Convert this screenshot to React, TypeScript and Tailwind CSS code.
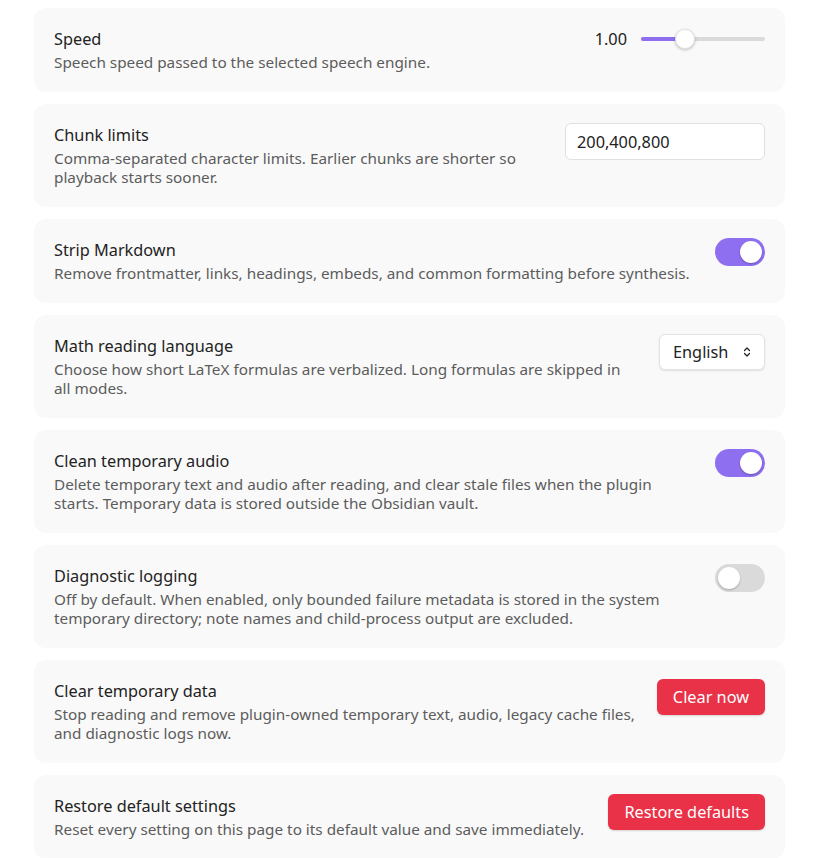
import type { ReactNode } from 'react';

interface SettingRowProps {
  name: string;
  desc: string;
  infoWidth: string;
  children: ReactNode;
}

function SettingRow({ name, desc, infoWidth, children }: SettingRowProps) {
  return (
    <div className="flex items-start justify-between rounded-xl bg-[#f9f9f9] px-5 pt-[19px] pb-5">
      <div className={`${infoWidth} min-w-0`}>
        <div className="text-[16.3px] leading-6 text-[#222222]">{name}</div>
        <div className="mt-[2px] text-[15.3px] leading-[19px] text-[#5c5c5c]">{desc}</div>
      </div>
      <div className="flex shrink-0 items-center justify-end">{children}</div>
    </div>
  );
}

function Toggle({ on }: { on: boolean }) {
  return (
    <div
      className={`flex h-[28px] w-[50px] items-center rounded-full px-[3px] ${
        on ? 'justify-end bg-[#8e6ff0]' : 'justify-start bg-[#dadada]'
      }`}
    >
      <div className="h-[22px] w-[22px] rounded-full bg-white shadow-[0_1px_2px_rgba(0,0,0,0.25)]" />
    </div>
  );
}

function DangerButton({ label }: { label: string }) {
  return (
    <button
      type="button"
      className="h-9 rounded-md bg-[#e93147] px-4 text-[16.3px] text-white shadow-[0_1px_2px_rgba(0,0,0,0.15)]"
    >
      {label}
    </button>
  );
}

export default function App() {
  return (
    <div className="min-h-[858px] bg-white font-['Noto_Sans','Open_Sans',sans-serif]">
      <div className="ml-[34px] flex w-[751px] flex-col gap-3 pt-2">
        <SettingRow name="Speed" desc="Speech speed passed to the selected speech engine." infoWidth="w-[500px]">
          <div className="flex h-6 items-center gap-[14px]">
            <span className="text-[16.3px] text-[#222222]">1.00</span>
            <div className="relative h-6 w-[124px]">
              <div className="absolute top-[10px] left-0 h-1 w-full rounded-full bg-[#dadada]" />
              <div className="absolute top-[10px] left-0 h-1 w-[44px] rounded-full bg-[#8e6ff0]" />
              <div className="absolute top-[2px] left-[34px] h-5 w-5 rounded-full border border-[#e4e4e4] bg-white shadow-[0_1px_3px_rgba(0,0,0,0.25)]" />
            </div>
          </div>
        </SettingRow>

        <SettingRow
          name="Chunk limits"
          desc="Comma-separated character limits. Earlier chunks are shorter so playback starts sooner."
          infoWidth="w-[480px]"
        >
          <input
            readOnly
            value="200,400,800"
            className="h-[37px] w-[200px] rounded-md border border-[#e0e0e0] bg-white px-[11px] text-[16.3px] text-[#222222] outline-none"
          />
        </SettingRow>

        <SettingRow
          name="Strip Markdown"
          desc="Remove frontmatter, links, headings, embeds, and common formatting before synthesis."
          infoWidth="w-[660px]"
        >
          <Toggle on />
        </SettingRow>

        <SettingRow
          name="Math reading language"
          desc="Choose how short LaTeX formulas are verbalized. Long formulas are skipped in all modes."
          infoWidth="w-[575px]"
        >
          <div className="flex h-9 w-[106px] items-center justify-between rounded-md border border-[#e3e3e3] bg-white pr-[11px] pl-[13px] text-[16.3px] text-[#222222] shadow-[0_1px_2px_rgba(0,0,0,0.1)]">
            <span>English</span>
            <svg width="12" height="12" viewBox="0 0 24 24" fill="none" stroke="#222222" strokeWidth="2.5" strokeLinecap="round" strokeLinejoin="round">
              <path d="m7 15 5 5 5-5" />
              <path d="m7 9 5-5 5 5" />
            </svg>
          </div>
        </SettingRow>

        <SettingRow
          name="Clean temporary audio"
          desc="Delete temporary text and audio after reading, and clear stale files when the plugin starts. Temporary data is stored outside the Obsidian vault."
          infoWidth="w-[620px]"
        >
          <Toggle on />
        </SettingRow>

        <SettingRow
          name="Diagnostic logging"
          desc="Off by default. When enabled, only bounded failure metadata is stored in the system temporary directory; note names and child-process output are excluded."
          infoWidth="w-[625px]"
        >
          <Toggle on={false} />
        </SettingRow>

        <SettingRow
          name="Clear temporary data"
          desc="Stop reading and remove plugin-owned temporary text, audio, legacy cache files, and diagnostic logs now."
          infoWidth="w-[595px]"
        >
          <DangerButton label="Clear now" />
        </SettingRow>

        <SettingRow
          name="Restore default settings"
          desc="Reset every setting on this page to its default value and save immediately."
          infoWidth="w-[560px]"
        >
          <DangerButton label="Restore defaults" />
        </SettingRow>
      </div>
    </div>
  );
}
